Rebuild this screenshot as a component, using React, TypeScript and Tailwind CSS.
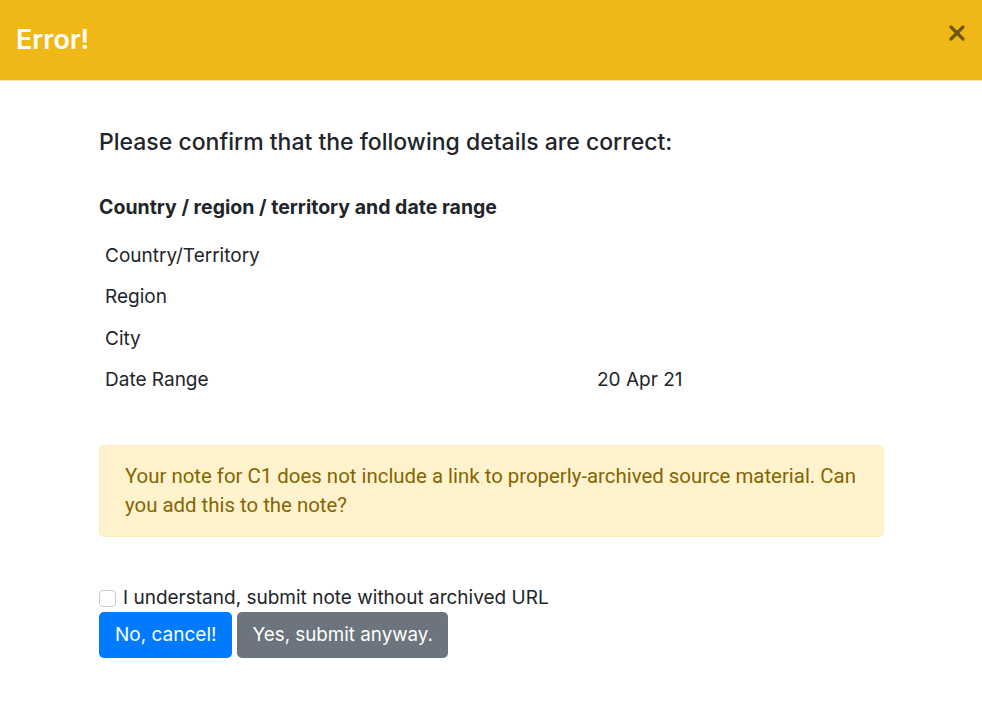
import React from "react";

const rows = [
  { label: "Country/Territory", value: "" },
  { label: "Region", value: "" },
  { label: "City", value: "" },
  { label: "Date Range", value: "20 Apr 21" },
];

const App = () => {
  return (
    <div className="w-[982px] h-[701px] bg-white font-['Inter',sans-serif] text-[#212529] overflow-hidden">
      <div className="flex h-[81px] items-center justify-between bg-[#efb817] border-b border-[#f3e3b0] pl-4 pr-4">
        <h1 className="text-[27px] font-semibold text-white">Error!</h1>
        <button className="mb-[14px] text-[#6d5811]">
          <svg width="18" height="18" viewBox="0 0 18 18">
            <path d="M3 3 L15 15 M15 3 L3 15" stroke="currentColor" strokeWidth="3.2" strokeLinecap="round" />
          </svg>
        </button>
      </div>

      <div className="pl-[99px] pr-[98px] pt-[44px]">
        <p className="text-[23px] font-medium leading-[34px]">
          Please confirm that the following details are correct:
        </p>

        <p className="mt-[33px] text-[19.5px] font-bold leading-[30px]">
          Country / region / territory and date range
        </p>

        <div className="mt-[13px] flex flex-col">
          {rows.map((r) => (
            <div key={r.label} className="flex h-[41.5px] items-center pl-[6px] text-[19px]">
              <span className="w-[492px]">{r.label}</span>
              <span>{r.value}</span>
            </div>
          ))}
        </div>

        <div className="mt-[44px] rounded-[5px] border border-[#ffeeba] bg-[#fff3cd] px-[25px] py-[16px] font-['Roboto',sans-serif] text-[20.4px] leading-[29px] text-[#856404]">
          Your note for C1 does not include a link to properly-archived source material. Can
          you add this to the note?
        </div>

        <label className="mt-[49px] flex items-center gap-[7px] text-[19px] leading-[24px]">
          <input type="checkbox" className="h-[17px] w-[17px] appearance-none rounded-[4px] border border-[#c9c9c9] bg-white" />
          <span>I understand, submit note without archived URL</span>
        </label>

        <div className="mt-[2px] flex gap-[5px]">
          <button className="h-[46px] rounded-[5px] bg-[#007bff] px-[16px] text-[19px] text-white">
            No, cancel!
          </button>
          <button className="h-[46px] rounded-[5px] bg-[#6c757d] px-[15px] text-[18.8px] text-white">
            Yes, submit anyway.
          </button>
        </div>
      </div>
    </div>
  );
};

export default App;
